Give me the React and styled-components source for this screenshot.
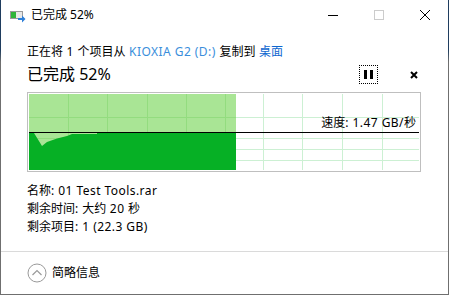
import React from "react";
import styled, { createGlobalStyle } from "styled-components";

const GlobalStyle = createGlobalStyle`
  html, body { margin: 0; padding: 0; }
  body {
    width: 449px;
    height: 295px;
    overflow: hidden;
    background: linear-gradient(to bottom, #1f3d5e 0px, #1f3d5e 50px, #6f6f6f 62px, #6f6f6f 100%);
    font-family: "Noto Sans", "Noto Sans CJK SC", sans-serif;
    color: #000;
  }
`;

const Frame = styled.div`
  width: 447px;
  height: 294px;
  margin-left: 1px;
  background: #fff;
  display: flex;
  flex-direction: column;
`;

const TitleBar = styled.div`
  height: 30px;
  display: flex;
  align-items: center;
  flex-shrink: 0;
`;

const TitleIcon = styled.svg`
  margin-left: 9px;
  width: 16px;
  height: 12px;
  margin-top: 3px;
`;

const TitleText = styled.span`
  margin-left: 5px;
  font-size: 12px;
  line-height: 16px;
`;

const WinButtons = styled.div`
  margin-left: auto;
  display: flex;
`;

const WinButton = styled.div`
  width: 46px;
  height: 30px;
  display: flex;
  align-items: center;
  justify-content: center;
`;

const Body = styled.div`
  padding: 0 26px;
  display: flex;
  flex-direction: column;
`;

const CopyLine = styled.div`
  margin-top: 14px;
  font-size: 12px;
  line-height: 16px;
  white-space: nowrap;
`;

const Latin = styled.span`
  letter-spacing: 0.45px;
  color: ${(p) => p.$color || "inherit"};
`;

const Link = styled.span`
  color: ${(p) => p.$color};
`;

const StatusRow = styled.div`
  margin-top: 3px;
  height: 22px;
  display: flex;
  align-items: center;
`;

const Percent = styled.div`
  font-size: 16px;
  line-height: 20px;
  flex: 1;
`;

const PauseButton = styled.div`
  width: 19px;
  height: 19px;
  box-sizing: border-box;
  border: 1px dotted #000;
  display: flex;
  align-items: center;
  justify-content: center;
  gap: 3px;
  margin-right: 32px;
`;

const PauseBar = styled.span`
  width: 3px;
  height: 9px;
  background: #000;
`;

const CancelIcon = styled.svg`
  width: 8px;
  height: 8px;
  margin-right: 4px;
  margin-top: 2px;
`;

const Chart = styled.div`
  position: relative;
  margin-top: 7px;
  width: 394px;
  height: 80px;
  box-sizing: border-box;
  border: 1px solid #bfbfbf;
  padding: 1px;
`;

const ChartSvg = styled.svg`
  display: block;
`;

const Speed = styled.div`
  position: absolute;
  right: 4px;
  top: 22px;
  font-size: 12px;
  line-height: 16px;
  white-space: nowrap;
`;

const Details = styled.div`
  margin-top: 10px;
  font-size: 12px;
  line-height: 18px;
`;

const Spacer = styled.div`
  flex: 1;
`;

const Footer = styled.div`
  height: 42px;
  border-top: 1px solid #dadada;
  display: flex;
  align-items: center;
  padding-left: 26px;
  flex-shrink: 0;
  gap: 5px;
`;

const FooterText = styled.span`
  font-size: 12px;
  line-height: 16px;
`;

const vLines = [39, 78, 118, 157, 196, 234, 273, 313, 353];
const hLines = [23, 44, 55, 66];

function Grid({ color }) {
  return (
    <g stroke={color} strokeWidth="1">
      {vLines.map((x) => (
        <line key={"v" + x} x1={x + 0.5} y1="0" x2={x + 0.5} y2="76" />
      ))}
      {hLines.map((y) => (
        <line key={"h" + y} x1="0" y1={y + 0.5} x2="390" y2={y + 0.5} />
      ))}
    </g>
  );
}

function SpeedChart() {
  return (
    <ChartSvg width="390" height="76" viewBox="0 0 390 76">
      <defs>
        <clipPath id="done">
          <rect x="0" y="0" width="207" height="76" />
        </clipPath>
      </defs>
      <rect x="0" y="0" width="390" height="76" fill="#fff" />
      <Grid color="#ccf0d3" />
      <rect x="0" y="0" width="207" height="76" fill="#a9e595" />
      <g clipPath="url(#done)">
        <Grid color="#93dc7f" />
      </g>
      <path
        d="M0,39 L5,39 L13,52 L18,48 L28,44.5 L38,42 L43,40 L68,40 L68,39 L207,39 L207,76 L0,76 Z"
        fill="#06b025"
      />
      <line x1="0" y1="38.5" x2="390" y2="38.5" stroke="#000" strokeWidth="1.2" />
    </ChartSvg>
  );
}

export default function App() {
  return (
    <>
      <GlobalStyle />
      <Frame>
        <TitleBar>
          <TitleIcon viewBox="0 0 16 12">
            <rect x="0.5" y="0.5" width="12" height="7" fill="#e8e8e8" stroke="#9a9a9a" />
            <rect x="1" y="1" width="5" height="6" fill="#2fb53a" />
            <path d="M8,7 H12 V4.5 L15.5,8 L12,11.5 V9 H8 Z" fill="#2d7fd8" />
          </TitleIcon>
          <TitleText>已完成 52%</TitleText>
          <WinButtons>
            <WinButton>
              <svg width="10" height="10" viewBox="0 0 10 10">
                <line x1="0" y1="5.5" x2="10" y2="5.5" stroke="#000" strokeWidth="1" />
              </svg>
            </WinButton>
            <WinButton>
              <svg width="10" height="10" viewBox="0 0 10 10">
                <rect x="0.5" y="0.5" width="9" height="9" fill="none" stroke="#cccccc" strokeWidth="1" />
              </svg>
            </WinButton>
            <WinButton>
              <svg width="10" height="10" viewBox="0 0 10 10">
                <path d="M0,0 L10,10 M10,0 L0,10" stroke="#000" strokeWidth="1" />
              </svg>
            </WinButton>
          </WinButtons>
        </TitleBar>
        <Body>
          <CopyLine>
            正在将<Latin> 1 </Latin>个项目从<Latin> </Latin>
            <Latin $color="#3a8edb">KIOXIA G2 (D:)</Latin>
            <Latin> </Latin>复制到<Latin> </Latin>
            <Link $color="#0f67cf">桌面</Link>
          </CopyLine>
          <StatusRow>
            <Percent>已完成 52%</Percent>
            <PauseButton>
              <PauseBar />
              <PauseBar />
            </PauseButton>
            <CancelIcon viewBox="0 0 8 8">
              <path d="M1,1 L7,7 M7,1 L1,7" stroke="#000" strokeWidth="2" />
            </CancelIcon>
          </StatusRow>
          <Chart>
            <SpeedChart />
            <Speed>
              速度<Latin>: 1.47 GB/</Latin>秒
            </Speed>
          </Chart>
          <Details>
            <div>
              名称<Latin>: 01 Test Tools.rar</Latin>
            </div>
            <div>
              剩余时间<Latin>: </Latin>大约<Latin> 20 </Latin>秒
            </div>
            <div>
              剩余项目<Latin>: 1 (22.3 GB)</Latin>
            </div>
          </Details>
        </Body>
        <Spacer />
        <Footer>
          <svg width="20" height="20" viewBox="0 0 20 20">
            <circle cx="10" cy="10" r="9" fill="none" stroke="#9a9a9a" strokeWidth="1" />
            <path d="M5.5,12 L10,7.5 L14.5,12" fill="none" stroke="#9a9a9a" strokeWidth="1.2" />
          </svg>
          <FooterText>简略信息</FooterText>
        </Footer>
      </Frame>
    </>
  );
}
